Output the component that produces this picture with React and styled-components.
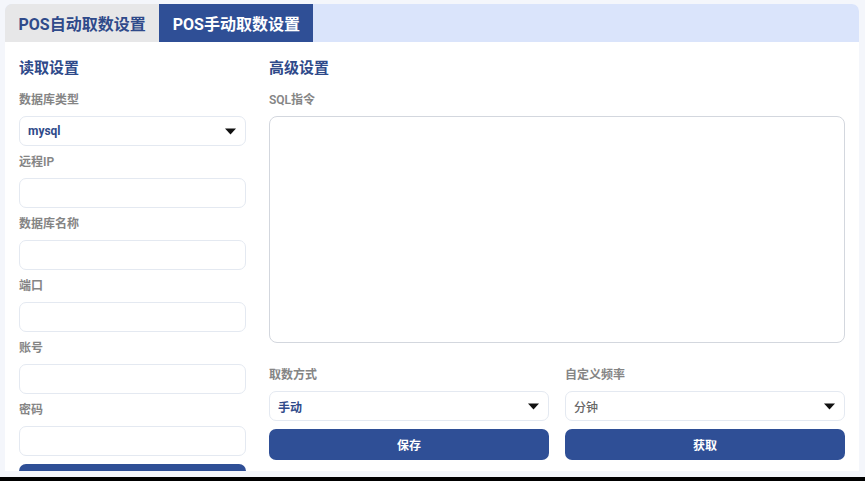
import React from "react";
import styled, { createGlobalStyle } from "styled-components";

const Global = createGlobalStyle`
  html, body {
    margin: 0;
    padding: 0;
    background: #f4f6fb;
    font-family: Roboto, "Noto Sans CJK SC", sans-serif;
  }
  * { box-sizing: border-box; }
`;

const BLUE = "#2f4f96";
const INK = "#2f4a8a";

const leftFields = [
  { label: "数据库类型", select: "mysql" },
  { label: "远程IP" },
  { label: "数据库名称" },
  { label: "端口" },
  { label: "账号" },
  { label: "密码" },
];

export default function App() {
  return (
    <Page>
      <Global />
      <Card>
        <TabBar>
          <Tab>POS自动取数设置</Tab>
          <Tab active>POS手动取数设置</Tab>
        </TabBar>
        <Body>
          <LeftCol>
            <SectionTitle>读取设置</SectionTitle>
            {leftFields.map((f) => (
              <Field key={f.label}>
                <Label>{f.label}</Label>
                {f.select ? (
                  <SelectBox>
                    <SelectValue strong>{f.select}</SelectValue>
                    <Caret />
                  </SelectBox>
                ) : (
                  <Input type={f.label === "密码" ? "password" : "text"} />
                )}
              </Field>
            ))}
            {/* only the top edge of this button shows below the fold */}
            <Button aria-label="连接" />
          </LeftCol>

          <RightCol>
            <SectionTitle>高级设置</SectionTitle>
            <Field>
              <Label>SQL指令</Label>
              <TextArea />
            </Field>
            <Row>
              <Field>
                <Label>取数方式</Label>
                <SelectBox>
                  <SelectValue strong>手动</SelectValue>
                  <Caret />
                </SelectBox>
                <Button>保存</Button>
              </Field>
              <Field>
                <Label>自定义频率</Label>
                <SelectBox>
                  <SelectValue>分钟</SelectValue>
                  <Caret />
                </SelectBox>
                <Button>获取</Button>
              </Field>
            </Row>
          </RightCol>
        </Body>
      </Card>
      <BottomBar />
    </Page>
  );
}

function Caret() {
  return (
    <CaretIcon width="11" height="7" viewBox="0 0 11 7">
      <path d="M0 0.5 L11 0.5 L5.5 6.5 Z" fill="#111" />
    </CaretIcon>
  );
}

const Page = styled.div`
  height: 481px;
  display: flex;
  flex-direction: column;
  padding: 4px 6px 0 5px;
  overflow: hidden;
`;

const Card = styled.div`
  height: 467px;
  background: #fff;
  border-radius: 7px 7px 0 0;
  display: flex;
  flex-direction: column;
  overflow: hidden;
`;

const TabBar = styled.div`
  height: 38px;
  flex: none;
  display: flex;
  background: #dae4fb;
`;

const Tab = styled.div`
  display: flex;
  align-items: center;
  padding: 0 13.5px;
  font-size: 16px;
  font-weight: 700;
  color: ${(p) => (p.active ? "#fff" : INK)};
  background: ${(p) => (p.active ? BLUE : "#e7e7e8")};
`;

const Body = styled.div`
  flex: 1;
  display: flex;
  gap: 23px;
  padding: 16px 14px 0 14px;
  overflow: hidden;
`;

const LeftCol = styled.div`
  width: 227px;
  flex: none;
  display: flex;
  flex-direction: column;
`;

const RightCol = styled.div`
  flex: 1;
  display: flex;
  flex-direction: column;
`;

const SectionTitle = styled.div`
  height: 20px;
  line-height: 20px;
  font-size: 15px;
  font-weight: 700;
  color: ${INK};
  margin-bottom: 14px;
`;

const Field = styled.div`
  display: flex;
  flex-direction: column;
`;

const Label = styled.div`
  height: 16px;
  line-height: 16px;
  font-size: 12px;
  font-weight: 600;
  color: #858585;
  margin-bottom: 8px;
`;

const Input = styled.input`
  height: 30px;
  border: 1px solid #e4e9f1;
  border-radius: 7px;
  background: #fff;
  margin-bottom: 8px;
  padding: 0 8px;
  outline: none;
`;

const SelectBox = styled.div`
  height: 30px;
  border: 1px solid #e4e9f1;
  border-radius: 7px;
  background: #fff;
  margin-bottom: 8px;
  padding: 0 8px 0 8px;
  display: flex;
  align-items: center;
  justify-content: space-between;
`;

const SelectValue = styled.span`
  font-size: 12px;
  font-weight: ${(p) => (p.strong ? 700 : 500)};
  color: ${(p) => (p.strong ? INK : "#666")};
`;

const CaretIcon = styled.svg`
  display: block;
  margin-right: 1px;
`;

const TextArea = styled.div`
  height: 227px;
  border: 1px solid #d3d7de;
  border-radius: 8px;
  background: #fff;
  margin-bottom: 24px;
`;

const Row = styled.div`
  display: grid;
  grid-template-columns: 1fr 1fr;
  gap: 16px;
`;

const Button = styled.button`
  height: 31px;
  flex: none;
  border: none;
  border-radius: 7px;
  background: ${BLUE};
  color: #fff;
  font-family: Roboto, "Noto Sans CJK SC", sans-serif;
  font-size: 12px;
  font-weight: 700;
  cursor: pointer;
`;

const BottomBar = styled.div`
  margin: 6px -6px 0 -5px;
  height: 4px;
  background: #000;
`;
